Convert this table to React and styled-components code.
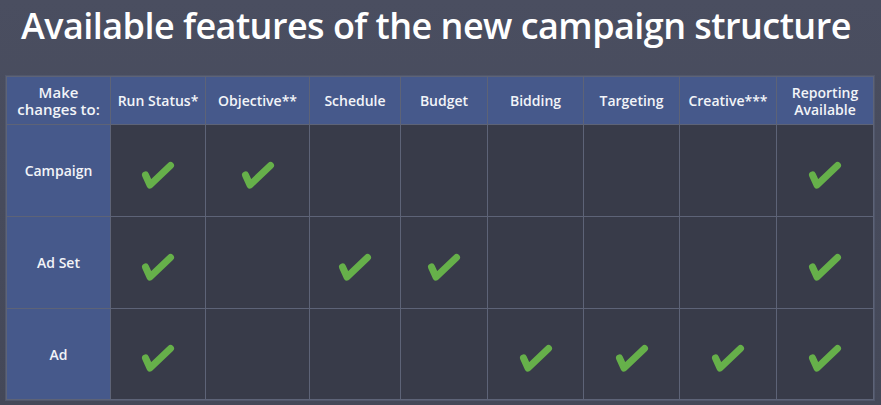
import React from "react";
import styled, { createGlobalStyle } from "styled-components";

const Global = createGlobalStyle`
  html, body { margin: 0; padding: 0; background: #474b5d; }
  body { width: 881px; height: 405px; overflow: hidden; }
`;

const Page = styled.div`
  width: 881px;
  height: 405px;
  box-sizing: border-box;
  padding: 3px 0 0 6px;
  background: linear-gradient(#4a4e60, #444858);
  font-family: "Open Sans", "Noto Sans", sans-serif;
  color: #fff;
`;

const Title = styled.h1`
  margin: 0 0 0 15px;
  font-size: 36px;
  font-weight: 600;
  line-height: 46px;
  letter-spacing: -0.55px;
  white-space: nowrap;
`;

const Table = styled.div`
  margin-top: 27px;
  display: grid;
  grid-template-columns: 103px 94px 103px 90px 86px 95px 95px 96px 96px;
  grid-template-rows: 47px 91px 91px 90px;
  gap: 1px;
  width: max-content;
  background: #5d6377;
  border: 1px solid #5d6377;
  box-shadow: 0 0 0 1px #51576b;
`;

const Cell = styled.div`
  display: flex;
  align-items: center;
  justify-content: center;
  text-align: center;
  background: ${(p) => (p.$head ? "#46598b" : "#383b49")};
  font-size: ${(p) => (p.$big ? "15px" : "14px")};
  font-weight: 600;
  line-height: 17px;
  color: #f2f4f8;
`;

const CheckSvg = styled.svg`
  overflow: visible;
  margin-top: 4px;
`;

const Check = () => (
  <CheckSvg width="36" height="32" viewBox="0 0 36 32">
    <path
      d="M5.5 18 L10 28 L30.5 8.5"
      fill="none"
      stroke="#66b04a"
      strokeWidth="7"
      strokeLinecap="round"
      strokeLinejoin="round"
    />
  </CheckSvg>
);

const headers = [
  "Make\nchanges to:",
  "Run Status*",
  "Objective**",
  "Schedule",
  "Budget",
  "Bidding",
  "Targeting",
  "Creative***",
  "Reporting\nAvailable",
];

const rows = [
  ["Campaign", [1, 1, 0, 0, 0, 0, 0, 1]],
  ["Ad Set", [1, 0, 1, 1, 0, 0, 0, 1]],
  ["Ad", [1, 0, 0, 0, 1, 1, 1, 1]],
];

const Multi = styled.span`
  white-space: pre-line;
`;

export default function App() {
  return (
    <Page>
      <Global />
      <Title>Available features of the new campaign structure</Title>
      <Table>
        {headers.map((h, i) => (
          <Cell key={h} $head $big={i === 0}>
            <Multi>{h}</Multi>
          </Cell>
        ))}
        {rows.map(([label, vals]) => (
          <React.Fragment key={label}>
            <Cell $head>{label}</Cell>
            {vals.map((v, j) => (
              <Cell key={j}>{v ? <Check /> : null}</Cell>
            ))}
          </React.Fragment>
        ))}
      </Table>
    </Page>
  );
}
